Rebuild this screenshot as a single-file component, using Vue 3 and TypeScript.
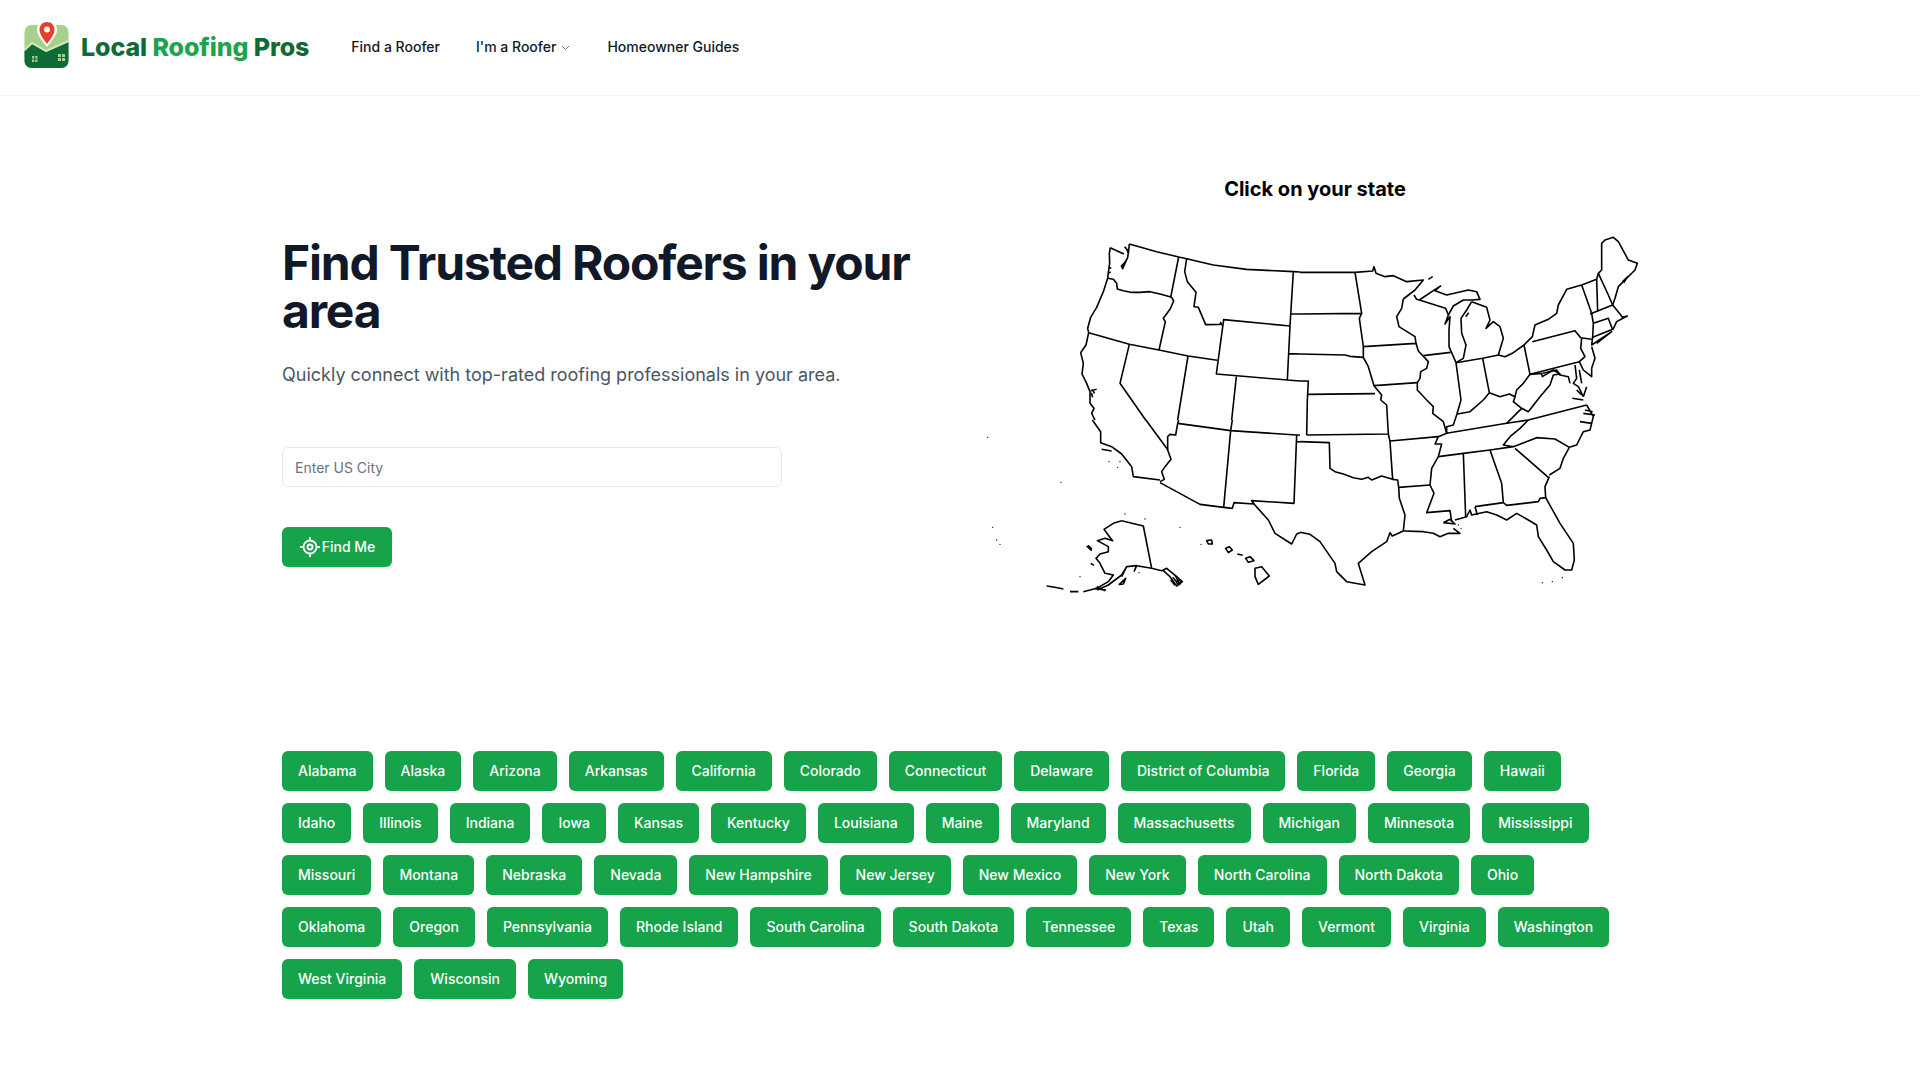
<script setup lang="ts">
const navLinks = [
  { label: "Find a Roofer", caret: false },
  { label: "I'm a Roofer", caret: true },
  { label: "Homeowner Guides", caret: false },
];

const states = [
  "Alabama", "Alaska", "Arizona", "Arkansas", "California", "Colorado", "Connecticut", "Delaware",
  "District of Columbia", "Florida", "Georgia", "Hawaii", "Idaho", "Illinois", "Indiana", "Iowa",
  "Kansas", "Kentucky", "Louisiana", "Maine", "Maryland", "Massachusetts", "Michigan", "Minnesota",
  "Mississippi", "Missouri", "Montana", "Nebraska", "Nevada", "New Hampshire", "New Jersey",
  "New Mexico", "New York", "North Carolina", "North Dakota", "Ohio", "Oklahoma", "Oregon",
  "Pennsylvania", "Rhode Island", "South Carolina", "South Dakota", "Tennessee", "Texas", "Utah",
  "Vermont", "Virginia", "Washington", "West Virginia", "Wisconsin", "Wyoming",
];

// map lines are traced at 3x, one list per quadrant of the map
const northWest = [
  "M448 72L530 95L596 111L620 116L700 135L800 148L940 155L960 156",
  "M391 83L388 100L389 130L386 150L383 175M391 83L410 92L432 102",
  "M448 72L446 92L443 112L436 128L428 146L424 138L432 130L426 142L440 118",
  "M434 80L444 92M438 84L446 100M386 145L394 143M384 160L392 156",
  "M383 175L400 178L410 190L412 207L430 212L452 217L480 217L510 215L540 222L575 232",
  "M596 111L572 232M575 232L581 243L570 268L550 295L556 305L537 390",
  "M383 175L370 215L350 262L332 292L323 325L326 338L318 375L302 398L310 430L306 462L320 490L330 515L330 550L342 565L335 580L345 600",
  "M332 512L350 508M334 518L338 532M336 508L344 520",
  "M326 338L448 373L537 390L624 408L712 421",
  "M620 116L614 155L622 185L648 217L642 260L655 262L677 314L720 313L722 308L726 316",
  "M731 299L930 318L922 480L709 462ZM940 155L930 318M933 282L960 282M928 401L960 402M922 480L960 483",
  "M448 373L420 490L497 600M624 408L593 600M769 470L755 600",
];
const southWest = [
  "M496 58L560 145M596 60L593 70M757 60L752 92L731 322",
  "M337 60L362 95L362 128L395 140L425 162L455 200L460 230L540 240",
  "M560 145L563 150L573 178L555 200L545 215L553 238L540 245",
  "M593 70L587 105L570 103L563 110L563 150",
  "M593 70L752 92L950 105L960 105M950 105L942 310L815 302L822 312L762 308L757 325L731 322L660 313L540 248",
  "M950 125L960 126",
  "M822 312L865 360L885 400L935 432L950 402L960 398",
  "M425 362L400 370L372 388L392 415L398 422L375 415L352 422L385 440L385 455L360 462L348 475L360 490L375 520L400 525L385 545L350 565L310 575",
  "M425 362L490 378L515 505L545 512L560 505L590 530L607 545L590 558L570 530L550 512",
  "M515 505L470 497L440 500L425 525L385 555L352 570M440 500L425 530M470 497L462 515M418 553L437 535L430 552Z",
  "M578 532L592 548M585 525L600 555M572 540L585 556M596 540a6 6 0 1 0 .1 0",
  "M680 422L695 420L697 432L685 432ZM737 445L748 440L757 450L745 458ZM797 475L810 470L822 482L805 487ZM825 505L845 500L868 528L835 553L825 530Z",
  "M772 462L788 466M320 438L335 452M324 436L336 448M332 490L342 496",
  "M200 558L225 562L250 567M270 575L295 575M345 566L378 570M350 560L375 572M365 148L395 153",
];
const northEast = [
  "M0 157L165 157L218 153L222 140L228 160L255 170L280 167L320 185L370 180L345 210L310 237",
  "M0 282L185 280M165 157L185 280L178 295L190 380L190 412L205 440L222 497L245 525L242 540",
  "M0 402L135 405L150 409L190 412M0 483L25 483L22 540M25 523L225 521",
  "M190 380L348 370M310 237L305 265L290 290L297 320L345 350L348 370L355 393L385 425L380 445L362 455L360 475L352 488L352 510L380 540",
  "M222 497L352 488M370 407L452 397",
  "M342 225L350 238L358 240L415 258L437 265L445 285L435 312L450 290L447 330L447 380L468 428",
  "M358 240L400 212L422 198L405 212L440 225L505 210L530 215L540 238L515 240L490 240L460 258L445 285",
  "M515 245L560 262L570 300L558 325L580 305L600 320L610 355L595 405M515 245L500 270L483 295L485 340L498 375L490 415L468 428",
  "M385 178L398 170M497 290L506 278",
  "M468 428L548 415L595 405L615 410L640 398L672 375L697 350L705 315L745 298L770 280L775 255L800 208L845 195L890 178",
  "M468 428L483 540M550 540L568 518L600 530L628 522L645 530L650 510L670 490L690 463M548 415L568 518",
  "M672 375L690 463L838 425M697 365L825 332L842 353L875 358",
  "M645 530L640 545L665 565L685 575L720 530L750 495L760 465L780 462L760 450L727 470L725 460L690 463",
  "M728 460L770 450L780 465L805 470L810 490",
  "M845 355L842 385L855 410L838 425L850 450L875 470L875 445M875 380L885 415L875 445",
  "M825 435L830 475L820 490L835 500L850 530M817 535L850 540M860 500L850 530M838 450L845 490M830 510L845 525",
  "M845 195L875 280L880 310L878 350L875 375L935 335L890 370",
  "M870 282L938 255L960 282L967 292L982 288L950 305L938 330M880 310L925 295L938 330M878 352L938 328",
  "M890 178L893 275M895 160L925 225L938 255",
  "M890 178L895 160L905 150L905 70L915 60L940 52L955 65L985 120L1012 130L1005 150L975 180L955 200L945 235L938 255",
  "M968 185L985 168M972 188L980 172",
];
const southEast = [
  "M242 0L260 15L265 102L20 105M22 0L20 105M0 125L88 128L90 205L105 215L130 222L160 233L185 238L205 232L215 240L245 228L278 238",
  "M265 102L270 125L278 238L293 240L296 262L298 295L315 345L310 393",
  "M270 123L415 110L405 132L425 132L415 170M380 0L400 20L398 40L430 65L440 100L415 110",
  "M483 0L470 45L460 75L440 80L440 100L480 93L620 70L685 60L860 15",
  "M472 42L510 35L550 0M620 70L665 25",
  "M415 170L490 160L570 150L640 140L710 113L765 117L808 142M685 60L660 85L630 110L610 135L640 140",
  "M645 145L745 232M808 142L790 175L780 205L748 225",
  "M570 150L605 250L610 308L620 316L715 305L720 295L737 293L735 260L748 230",
  "M490 160L497 350M525 320L610 308M525 320L532 345",
  "M415 170L395 205L390 255L402 280L380 338L450 332L455 365",
  "M296 262L390 255",
  "M310 393L370 395L400 400L420 410L445 400L480 400L460 385M430 368L450 358L465 372L430 368",
  "M465 360L500 350L510 330L515 345L560 335L590 345L620 360L650 340L685 360L710 375L715 410L740 450L760 485L795 510L815 510L823 480L820 430L780 370L737 293",
  "M0 397L30 403L60 425L105 490L110 515L140 545L195 555L178 500L175 490L215 455L260 425L270 398L277 408L310 393",
  "M808 142L830 135L850 95L870 90L880 50L860 15M850 40L885 45M840 65L875 70M855 30L878 35",
];
const islandDots = [
  [23, 112], [243, 247], [387, 185], [420, 185], [413, 202], [38, 382], [50, 420], [60, 433],
  [663, 433], [600, 382], [435, 342], [495, 357], [300, 530], [477, 518],
];
const keyDots = [[727, 548], [757, 545], [787, 533], [475, 375], [483, 385]];
</script>

<template>
  <div class="page">
    <header class="top">
      <div class="brand">
        <svg class="brand-mark" width="47" height="48" viewBox="0 0 47 48">
          <rect x="1.500" y="5" width="44" height="43" rx="7" fill="#a8d08d" />
          <path d="M1.500 31L9 24L23 32L45.500 22V41a7 7 0 0 1-7 7H8.500a7 7 0 0 1-7-7Z" fill="#0f6b35" />
          <path d="M1.500 30L9 23L23 31L45.500 21" fill="none" stroke="#d4e8c0" stroke-width="2" />
          <path d="M9 36h5.500v6H9ZM42 34h-7v7h7Z" fill="#a8d08d" />
          <path d="M11.750 36v6M9 39h5.500M38.500 34v7M35 37.500h7" stroke="#0f6b35" stroke-width="1" />
          <path d="M24 0C18 0 14 4.500 14 10C14 15.500 21 23 24 27C27 23 34 15.500 34 10C34 4.500 30 0 24 0Z" fill="#fff" />
          <path d="M24 2C19.500 2 16.500 5.500 16.500 10C16.500 14.500 21.500 20.500 24 24C26.500 20.500 31.500 14.500 31.500 10C31.500 5.500 28.500 2 24 2Z" fill="#e8402f" />
          <circle cx="24" cy="9.500" r="3" fill="#fff" />
        </svg>
        <span class="brand-name">Local <em>Roofing</em> Pros</span>
      </div>
      <nav class="nav">
        <a v-for="link in navLinks" :key="link.label" class="nav-link">
          {{ link.label }}
          <svg v-if="link.caret" width="11" height="10" viewBox="0 0 11 10">
            <path d="M2 4l3.500 3.500L9 4" fill="none" stroke="#6b7280" stroke-width="1" />
          </svg>
        </a>
      </nav>
    </header>

    <main class="main">
      <section class="hero">
        <div class="intro">
          <h1>Find Trusted Roofers in your area</h1>
          <p>Quickly connect with top-rated roofing professionals in your area.</p>
          <input class="city" type="text" placeholder="Enter US City" />
          <button class="find" type="button">
            <svg width="22" height="22" viewBox="0 0 22 22" fill="none" stroke="#fff" stroke-width="1.800">
              <circle cx="11" cy="11" r="6.500" />
              <circle cx="11" cy="11" r="2.500" />
              <path d="M11 1v3.500M11 17.500V21M1 11h3.500M17.500 11H21" />
            </svg>
            Find Me
          </button>
        </div>

        <div class="map-block">
          <h2>Click on your state</h2>
          <svg class="map" width="680" height="390" viewBox="0 0 2040 1170" fill="none" stroke="#000" stroke-width="4.800" stroke-linejoin="round">
            <path v-for="d in northWest" :key="d" :d="d" />
            <g transform="translate(0 540)">
              <path v-for="d in southWest" :key="d" :d="d" />
              <circle v-for="dot in islandDots" :key="dot.join()" :cx="dot[0]" :cy="dot[1]" r="2" fill="#000" stroke="none" />
            </g>
            <g transform="translate(960 0)">
              <path v-for="d in northEast" :key="d" :d="d" />
            </g>
            <g transform="translate(960 540)">
              <path v-for="d in southEast" :key="d" :d="d" />
              <circle v-for="dot in keyDots" :key="dot.join()" :cx="dot[0]" :cy="dot[1]" r="2" fill="#000" stroke="none" />
            </g>
          </svg>
        </div>
      </section>

      <section class="states">
        <a v-for="state in states" :key="state" class="state">{{ state }}</a>
      </section>
    </main>
  </div>
</template>

<style scoped>
.page {
  font-family: Inter, "Liberation Sans", sans-serif;
  color: #111827;
}
.top {
  display: flex;
  align-items: center;
  gap: 42px;
  box-sizing: border-box;
  height: 96px;
  padding: 0 24px 2px 23px;
  border-bottom: 1px solid #f3f4f6;
}
.brand {
  display: flex;
  align-items: center;
  gap: 11px;
}
.brand-mark {
  display: block;
  margin-bottom: 6px;
}
.brand-name {
  font-size: 25px;
  font-weight: 800;
  letter-spacing: -0.1px;
  color: #0f6b35;
}
.brand-name em {
  font-style: normal;
  color: #1ba34d;
}
.nav {
  display: flex;
  gap: 36px;
}
.nav-link {
  display: flex;
  align-items: center;
  gap: 4px;
  font-size: 14px;
  font-weight: 500;
  line-height: 20px;
}
.main {
  padding: 79px 0 0 282px;
}
.hero {
  display: grid;
  grid-template-columns: 686px 692px;
}
.intro {
  display: flex;
  flex-direction: column;
  align-items: flex-start;
  padding-top: 64px;
}
h1 {
  margin: 0;
  font-size: 48px;
  font-weight: 700;
  line-height: 48px;
  letter-spacing: -1.200px;
  color: #111827;
}
.intro p {
  margin: 26px 0 0;
  font-size: 18px;
  line-height: 28px;
  color: #4b5563;
}
.city {
  box-sizing: border-box;
  width: 500px;
  height: 40px;
  margin-top: 58px;
  padding: 0 12px;
  border: 1px solid #e5e7eb;
  border-radius: 6px;
  background: #fff;
  font: 400 14px Inter, sans-serif;
  outline: none;
}
.city::placeholder {
  color: #6b7280;
}
.find {
  display: flex;
  align-items: center;
  justify-content: center;
  gap: 1px;
  width: 110px;
  height: 40px;
  margin-top: 40px;
  padding: 0 0 1px;
  border: none;
  border-radius: 6px;
  background: #16a34a;
  color: #fff;
  font: 500 14px Inter, sans-serif;
}
.map-block h2 {
  margin: 0 0 17px;
  padding-left: 2px;
  font-size: 20px;
  font-weight: 700;
  line-height: 28px;
  text-align: center;
  color: #000;
}
.map {
  display: block;
  margin-left: 12px;
}
.states {
  display: flex;
  flex-wrap: wrap;
  gap: 12px;
  width: 1340px;
  margin-top: 141px;
}
.state {
  padding: 10px 16px;
  border-radius: 6px;
  background: #16a34a;
  color: #fff;
  font-size: 14px;
  font-weight: 500;
  line-height: 20px;
}
</style>

<style>
html,
body {
  background: #fff;
}
</style>
